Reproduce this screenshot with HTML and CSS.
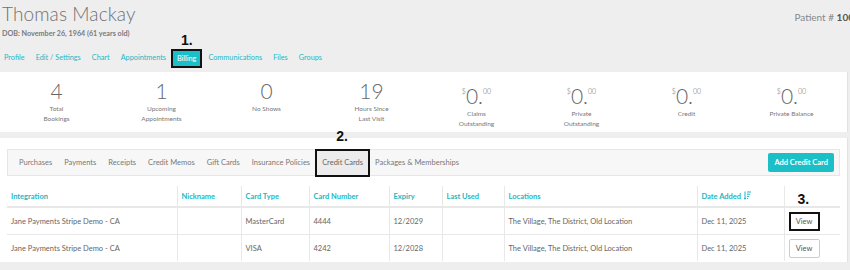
FILE: index.html
```html
<!DOCTYPE html>
<html lang="en">
<head>
  <meta charset="UTF-8">
  <title>Thomas Mackay - Billing</title>
  <link rel="stylesheet" href="styles.css">
</head>
<body>
  <div class="page">
    <!-- Patient header -->
    <div class="patient-header">
      <div>
        <h1 class="patient-name">Thomas Mackay</h1>
        <div class="patient-dob">DOB: November 26, 1964 (61 years old)</div>
      </div>
      <div class="patient-number">Patient # <b>100</b></div>
    </div>

    <nav class="main-tabs">
      <a class="tab">Profile</a>
      <a class="tab">Edit / Settings</a>
      <a class="tab">Chart</a>
      <a class="tab">Appointments</a>
      <a class="tab active">Billing<span class="step step-1">1.</span></a>
      <a class="tab">Communications</a>
      <a class="tab">Files</a>
      <a class="tab">Groups</a>
    </nav>

    <!-- Stats -->
    <div class="panel stats">
      <div class="stat"><div class="stat-value">4</div><div class="stat-label">Total<br>Bookings</div></div>
      <div class="stat"><div class="stat-value">1</div><div class="stat-label">Upcoming<br>Appointments</div></div>
      <div class="stat"><div class="stat-value">0</div><div class="stat-label">No Shows</div></div>
      <div class="stat"><div class="stat-value">19</div><div class="stat-label">Hours Since<br>Last Visit</div></div>
      <div class="stat"><div class="stat-value money"><sup>$</sup>0.<sup>00</sup></div><div class="stat-label">Claims<br>Outstanding</div></div>
      <div class="stat"><div class="stat-value money"><sup>$</sup>0.<sup>00</sup></div><div class="stat-label">Private<br>Outstanding</div></div>
      <div class="stat"><div class="stat-value money"><sup>$</sup>0.<sup>00</sup></div><div class="stat-label">Credit</div></div>
      <div class="stat"><div class="stat-value money"><sup>$</sup>0.<sup>00</sup></div><div class="stat-label">Private Balance</div></div>
    </div>

    <!-- Billing -->
    <div class="panel billing">
      <div class="sub-tabs">
        <div class="sub-tab-list">
          <a class="sub-tab">Purchases</a>
          <a class="sub-tab">Payments</a>
          <a class="sub-tab">Receipts</a>
          <a class="sub-tab">Credit Memos</a>
          <a class="sub-tab">Gift Cards</a>
          <a class="sub-tab">Insurance Policies</a>
          <a class="sub-tab active">Credit Cards<span class="step step-2">2.</span></a>
          <a class="sub-tab">Packages &amp; Memberships</a>
        </div>
        <button class="btn-primary">Add Credit Card</button>
      </div>

      <table class="cards-table">
        <colgroup>
          <col style="width: 170px">
          <col style="width: 64px">
          <col style="width: 68px">
          <col style="width: 80px">
          <col style="width: 53px">
          <col style="width: 62px">
          <col style="width: 193px">
          <col style="width: 87px">
          <col>
        </colgroup>
        <thead>
          <tr>
            <th>Integration</th>
            <th>Nickname</th>
            <th>Card Type</th>
            <th>Card Number</th>
            <th>Expiry</th>
            <th>Last Used</th>
            <th>Locations</th>
            <th>Date Added
              <svg class="sort-icon" width="7" height="9" viewBox="0 0 7 9">
                <path d="M1 0.5V8M0 6.8L1 8.3L2 6.8" fill="none" stroke="currentColor" stroke-width="1"/>
                <path d="M3 1H7M3 3.2H6.2M3 5.4H5.2M3 7.6H4.2" stroke="currentColor" stroke-width="1"/>
              </svg>
            </th>
            <th class="action-col"><span class="step step-3">3.</span></th>
          </tr>
        </thead>
        <tbody>
          <tr>
            <td>Jane Payments Stripe Demo - CA</td>
            <td></td>
            <td>MasterCard</td>
            <td>4444</td>
            <td>12/2029</td>
            <td></td>
            <td>The Village, The District, Old Location</td>
            <td>Dec 11, 2025</td>
            <td class="action-col"><button class="btn-view highlighted">View</button></td>
          </tr>
          <tr>
            <td>Jane Payments Stripe Demo - CA</td>
            <td></td>
            <td>VISA</td>
            <td>4242</td>
            <td>12/2028</td>
            <td></td>
            <td>The Village, The District, Old Location</td>
            <td>Dec 11, 2025</td>
            <td class="action-col"><button class="btn-view">View</button></td>
          </tr>
        </tbody>
      </table>
    </div>
  </div>
</body>
</html>
```

FILE: styles.css
```css
body {
  margin: 0;
  padding: 0;
  background: #eeeeef;
  font-family: Lato, 'Liberation Sans', sans-serif;
  color: #666;
  overflow: hidden;
}
.page {
  width: 850px;
  height: 270px;
}
.patient-header {
  display: flex;
  justify-content: space-between;
  align-items: flex-start;
  padding: 0 0 0 2px;
}
.patient-name {
  margin: 0;
  padding-top: 2px;
  font-size: 19px;
  font-weight: 300;
  line-height: 24px;
  letter-spacing: 0.1px;
  color: #707070;
}
.patient-dob {
  font-size: 7.2px;
  font-weight: 700;
  color: #7a7a7a;
  line-height: 12px;
  margin-top: 2px;
}
.patient-number {
  font-size: 10px;
  color: #888;
  margin-top: 11px;
  white-space: nowrap;
  margin-right: -4px;
}
.patient-number b {
  color: #555;
}
.main-tabs {
  display: flex;
  align-items: center;
  height: 18px;
  margin-top: 9px;
  padding-left: 4px;
}
.tab {
  position: relative;
  font-size: 7.3px;
  color: #1cb8c3;
  margin-right: 11px;
  line-height: 18px;
}
.tab.active {
  background: #19c0c9;
  color: #fff;
  border: 2px solid #111;
  padding: 0 4px;
  line-height: 15px;
  margin-left: -6px;
  margin-right: 6px;
}
.step {
  position: absolute;
  font-family: 'Liberation Sans', Arial, sans-serif;
  font-weight: 700;
  font-size: 14px;
  line-height: 14px;
  color: #111;
}
.step-1 { left: 8px; top: -18px; }
.step-2 { left: 19px; top: -22px; }
.step-3 { left: 13px; top: 6px; }
.panel {
  background: #fff;
  border-right: 1px solid #e2e2e2;
  margin-right: 2px;
}
.stats {
  display: grid;
  grid-template-columns: repeat(8, 105px);
  padding-left: 4px;
  height: 60px;
  margin-top: 5px;
  box-sizing: border-box;
  padding-top: 9px;
}
.stat {
  text-align: center;
}
.stat-value {
  font-size: 21px;
  font-weight: 300;
  line-height: 20px;
  color: #666;
}
.stat-value sup {
  font-size: 7px;
  vertical-align: 10px;
}
.stat-label {
  font-size: 6.5px;
  line-height: 10px;
  color: #777;
  margin-top: 3px;
}
.billing {
  margin-top: 6px;
  height: 124px;
  padding: 11px 7px 0 7px;
  box-sizing: border-box;
}
.sub-tabs {
  display: flex;
  justify-content: space-between;
  align-items: center;
  background: #f7f7f7;
  border: 1px solid #e6e6e6;
  height: 27px;
  box-sizing: border-box;
  padding-right: 5px;
}
.sub-tab-list {
  display: flex;
  align-items: center;
  padding-left: 11px;
}
.sub-tab {
  position: relative;
  font-size: 7.5px;
  color: #777;
  margin-right: 12px;
}
.sub-tab:nth-child(6) {
  margin-right: 10px;
}
.sub-tab.active {
  background: #ececec;
  border: 2px solid #111;
  color: #666;
  padding: 0 5px;
  line-height: 24px;
  margin-left: -5px;
  margin-right: 5px;
}
.btn-primary {
  font-family: inherit;
  font-size: 7.5px;
  font-weight: 700;
  color: #fff;
  background: #1bbfc7;
  border: none;
  border-radius: 2px;
  height: 19px;
  padding: 0 6px;
}
.cards-table {
  width: 100%;
  border-collapse: collapse;
  margin-top: 10px;
  table-layout: fixed;
}
.cards-table th {
  font-size: 7.5px;
  font-weight: 700;
  color: #1cb8c3;
  text-align: left;
  height: 20px;
  padding: 0 4px;
  border-bottom: 2px solid #e8e8e8;
  border-left: 1px solid #e8e8e8;
  position: relative;
  white-space: nowrap;
}
.cards-table td {
  font-size: 7.5px;
  color: #666;
  height: 26px;
  padding: 0 4px;
  border-left: 1px solid #e8e8e8;
  white-space: nowrap;
}
.cards-table tbody tr:first-child td {
  border-bottom: 1px solid #e8e8e8;
}
.cards-table th:first-child,
.cards-table td:first-child {
  border-left: none;
}
.sort-icon {
  vertical-align: -1px;
  margin-left: 1px;
}
.btn-view {
  font-family: inherit;
  font-size: 7.5px;
  color: #555;
  background: #fff;
  border: 1px solid #ccc;
  border-radius: 2px;
  height: 19px;
  width: 31px;
  padding: 0;
}
.btn-view.highlighted {
  border: 2px solid #111;
  border-radius: 0;
}
```
